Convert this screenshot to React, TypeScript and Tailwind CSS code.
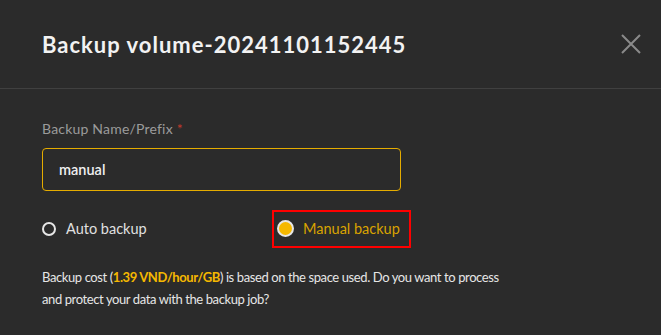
import React from "react";

const font = { fontFamily: "Lato, 'Noto Sans', sans-serif" };

export default function App() {
  return (
    <div
      className="w-[661px] h-[335px] overflow-hidden bg-[#2b2b2b] font-['Lato','Noto_Sans',sans-serif]"
      style={font}
    >
      <div className="flex h-[89px] items-center justify-between border-b border-[#404040] pl-[42px] pr-[20px]">
        <h2 className="text-[22px] font-bold tracking-[1px] text-[#f2f2f2]">
          Backup volume-20241101152445
        </h2>
        <button className="flex h-[20px] w-[20px] items-center justify-center" aria-label="Close">
          <svg width="20" height="20" viewBox="0 0 20 20" fill="none">
            <path d="M1 1L19 19M19 1L1 19" stroke="#8a8a8a" strokeWidth="2" />
          </svg>
        </button>
      </div>

      <div className="px-[42px] pt-[31px]">
        <label className="block text-[14px] leading-[18px] tracking-[0.2px] text-[#9b9b9b]">
          Backup Name/Prefix <span className="text-[#c0392b]">*</span>
        </label>
        <div className="mt-[10px] flex h-[43px] w-[359px] items-center rounded-[4px] border border-[#e5ac00] px-[16px]">
          <span className="text-[14.5px] font-semibold text-[#f0f0f0]">manual</span>
        </div>

        <div className="mt-[19px] flex h-[37px] items-center">
          <div className="flex w-[230px] items-center gap-[10px]">
            <span className="h-[14px] w-[14px] rounded-full border-2 border-[#e6e6e6]" />
            <span className="text-[14.5px] text-[#e0e0e0]">Auto backup</span>
          </div>
          <div className="flex h-[38px] items-center gap-[9px] border-2 border-[#ff0000] pl-[3px] pr-[9px]">
            <span className="h-[17px] w-[17px] rounded-full border-2 border-[#e6e6e6] bg-[#f5b800]" />
            <span className="text-[14.5px] text-[#d9a300]">Manual backup</span>
          </div>
        </div>

        <p className="mt-[19px] w-[470px] text-[13px] leading-[22px] tracking-[-0.4px] text-[#e6e6e6]">
          Backup cost (<span className="font-bold text-[#f5b800]">1.39 VND/hour/GB</span>) is based
          on the space used. Do you want to process and protect your data with the backup job?
        </p>
      </div>
    </div>
  );
}
